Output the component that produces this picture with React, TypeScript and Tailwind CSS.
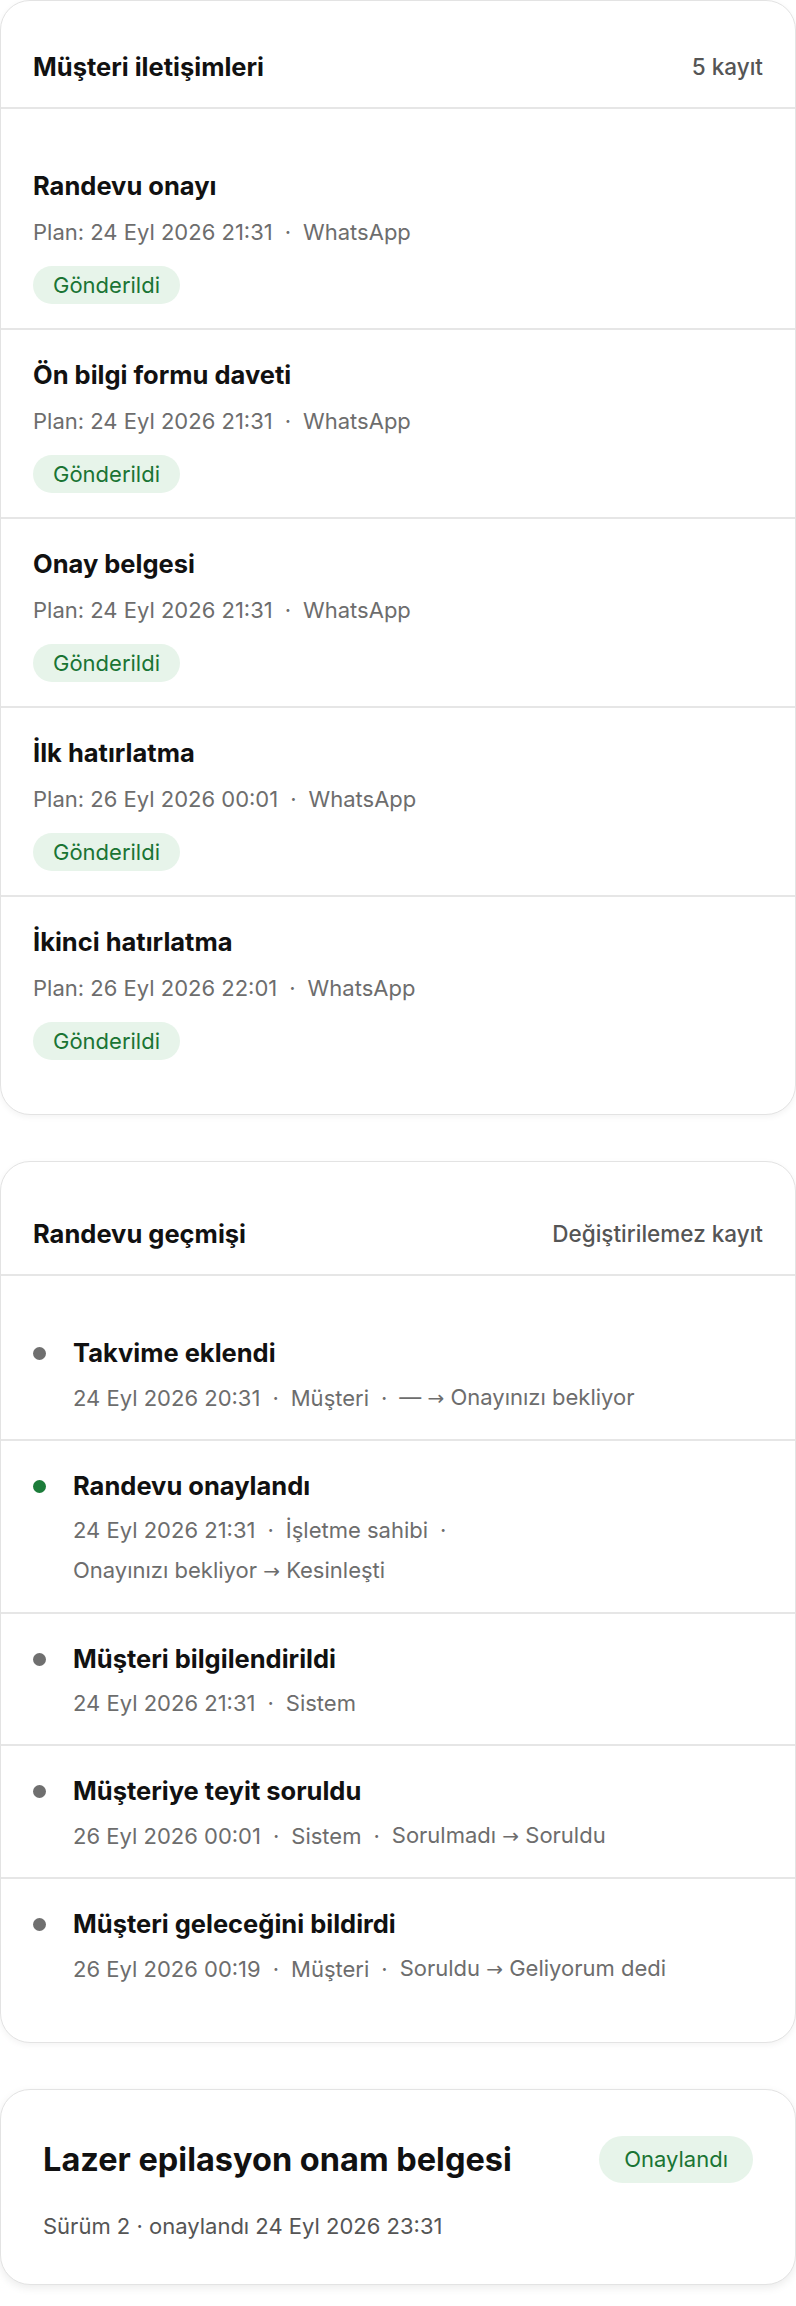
import React from "react";

type Message = {
  title: string;
  plan: string;
  channel: string;
};

type HistoryEntry = {
  title: string;
  tone: "gray" | "green";
  parts: string[];
};

const messages: Message[] = [
  { title: "Randevu onayı", plan: "Plan: 24 Eyl 2026 21:31", channel: "WhatsApp" },
  { title: "Ön bilgi formu daveti", plan: "Plan: 24 Eyl 2026 21:31", channel: "WhatsApp" },
  { title: "Onay belgesi", plan: "Plan: 24 Eyl 2026 21:31", channel: "WhatsApp" },
  { title: "İlk hatırlatma", plan: "Plan: 26 Eyl 2026 00:01", channel: "WhatsApp" },
  { title: "İkinci hatırlatma", plan: "Plan: 26 Eyl 2026 22:01", channel: "WhatsApp" },
];

const history: HistoryEntry[] = [
  {
    title: "Takvime eklendi",
    tone: "gray",
    parts: ["24 Eyl 2026 20:31", "Müşteri", "— → Onayınızı bekliyor"],
  },
  {
    title: "Randevu onaylandı",
    tone: "green",
    parts: ["24 Eyl 2026 21:31", "İşletme sahibi", "Onayınızı bekliyor → Kesinleşti"],
  },
  {
    title: "Müşteri bilgilendirildi",
    tone: "gray",
    parts: ["24 Eyl 2026 21:31", "Sistem"],
  },
  {
    title: "Müşteriye teyit soruldu",
    tone: "gray",
    parts: ["26 Eyl 2026 00:01", "Sistem", "Sorulmadı → Soruldu"],
  },
  {
    title: "Müşteri geleceğini bildirdi",
    tone: "gray",
    parts: ["26 Eyl 2026 00:19", "Müşteri", "Soruldu → Geliyorum dedi"],
  },
];

const Card = ({ children }: { children: React.ReactNode }) => (
  <section className="rounded-[30px] border border-[#e3e3e3] bg-white shadow-[0_2px_6px_rgba(0,0,0,0.05)]">
    {children}
  </section>
);

const CardHeader = ({ title, note }: { title: string; note: string }) => (
  <div className="flex items-center justify-between border-b-2 border-[#e6e6e6] px-8 pt-[48px] pb-[22px]">
    <h2 className="text-[25.5px] leading-[36px] font-bold text-[#111]">{title}</h2>
    <span className="text-[22.5px] leading-[30px] font-medium text-[#555]">{note}</span>
  </div>
);

// state changes use a long thin arrow, so the arrow gets its own face
const Transition = ({ text }: { text: string }) => {
  const pieces = text.split("→");
  return (
    <span>
      {pieces.map((p, i) => (
        <React.Fragment key={i}>
          {i > 0 && <span className="font-['DejaVu_Sans',sans-serif] text-[20px]">→</span>}
          {p}
        </React.Fragment>
      ))}
    </span>
  );
};

const Meta = ({ parts }: { parts: string[] }) => (
  <div className="flex flex-wrap items-center gap-x-[12px] gap-y-[10px] text-[22px] leading-[30px] text-[#6d6d6d]">
    {parts.map((part, i) => (
      <React.Fragment key={i}>
        {i > 0 && <span>·</span>}
        <Transition text={part} />
      </React.Fragment>
    ))}
  </div>
);

export default function App() {
  return (
    <div className="min-h-screen bg-white font-['Inter',sans-serif]">
      <div className="flex flex-col gap-[46px]">
        <Card>
          <CardHeader title="Müşteri iletişimleri" note="5 kayıt" />
          <ul className="pt-8 pb-[30px]">
            {messages.map((m, i) => (
              <li
                key={m.title}
                className={`px-8 pt-7 pb-[24px] ${
                  i < messages.length - 1 ? "border-b-2 border-[#e6e6e6]" : ""
                }`}
              >
                <h3 className="text-[25.5px] leading-[34px] font-bold text-[#111]">{m.title}</h3>
                <div className="mt-[14px]">
                  <Meta parts={[m.plan, m.channel]} />
                </div>
                <span className="mt-[19px] inline-flex h-[38px] items-center rounded-full bg-[#e7f4ea] px-[20px] text-[22px] text-[#1a7434]">
                  Gönderildi
                </span>
              </li>
            ))}
          </ul>
        </Card>

        <Card>
          <div className="pt-[6px]">
            <CardHeader title="Randevu geçmişi" note="Değiştirilemez kayıt" />
          </div>
          <ul className="py-8">
            {history.map((h, i) => (
              <li
                key={h.title}
                className={`flex gap-[27px] px-8 pt-7 pb-[26px] ${
                  i < history.length - 1 ? "border-b-2 border-[#e6e6e6]" : ""
                }`}
              >
                <span className="flex h-[34px] items-center">
                  <span
                    className={`h-[13px] w-[13px] rounded-full ${
                      h.tone === "green" ? "bg-[#1c7c3a]" : "bg-[#6f6f6f]"
                    }`}
                  />
                </span>
                <div className="flex-1">
                  <h3 className="text-[25.5px] leading-[34px] font-bold text-[#111]">{h.title}</h3>
                  <div className="mt-3">
                    <Meta parts={h.parts} />
                  </div>
                </div>
              </li>
            ))}
          </ul>
        </Card>

        <section className="flex flex-col gap-[28px] rounded-[30px] border border-[#e3e3e3] bg-white px-[42px] pt-[46px] pb-[43px] shadow-[0_3px_8px_rgba(0,0,0,0.08)]">
          <div className="flex items-center justify-between">
            <h2 className="text-[32.5px] leading-[40px] font-bold text-[#111]">Lazer epilasyon onam belgesi</h2>
            <span className="inline-flex h-[47px] items-center rounded-full bg-[#e7f4ea] px-[25px] text-[22px] text-[#1a7434]">
              Onaylandı
            </span>
          </div>
          <p className="text-[22px] leading-[30px] text-[#555]">Sürüm 2 · onaylandı 24 Eyl 2026 23:31</p>
        </section>
      </div>
    </div>
  );
}
